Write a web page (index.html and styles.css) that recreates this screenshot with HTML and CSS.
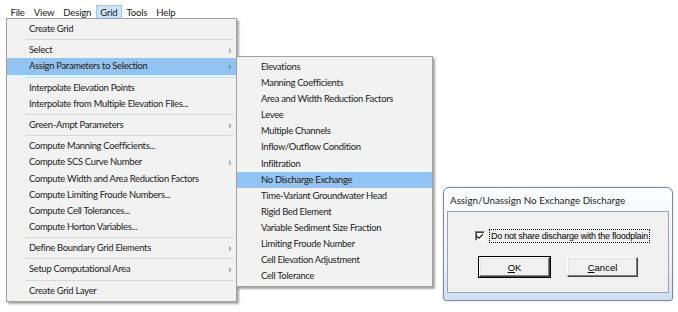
FILE: index.html
```html
<!DOCTYPE html>
<html lang="en">
<head>
    <meta charset="UTF-8">
    <meta name="viewport" content="width=device-width, initial-scale=1.0">
    <title>Grid Menu - No Discharge Exchange</title>
    <link rel="stylesheet" href="styles.css">
</head>
<body>
    <!-- Top menu bar -->
    <div class="menubar">
        <span class="menubar-item">File</span>
        <span class="menubar-item">View</span>
        <span class="menubar-item">Design</span>
        <span class="menubar-item open">Grid</span>
        <span class="menubar-item">Tools</span>
        <span class="menubar-item">Help</span>
    </div>

    <!-- Grid dropdown -->
    <div class="popup grid-menu">
        <div class="menu-item">Create Grid</div>
        <div class="menu-sep"></div>
        <div class="menu-item sub">Select</div>
        <div class="menu-item sub active">Assign Parameters to Selection</div>
        <div class="menu-sep"></div>
        <div class="menu-item">Interpolate Elevation Points</div>
        <div class="menu-item">Interpolate from Multiple Elevation Files...</div>
        <div class="menu-sep"></div>
        <div class="menu-item sub">Green-Ampt Parameters</div>
        <div class="menu-sep"></div>
        <div class="menu-item">Compute Manning Coefficients...</div>
        <div class="menu-item sub">Compute SCS Curve Number</div>
        <div class="menu-item">Compute Width and Area Reduction Factors</div>
        <div class="menu-item">Compute Limiting Froude Numbers...</div>
        <div class="menu-item">Compute Cell Tolerances...</div>
        <div class="menu-item">Compute Horton Variables...</div>
        <div class="menu-sep"></div>
        <div class="menu-item sub">Define Boundary Grid Elements</div>
        <div class="menu-sep"></div>
        <div class="menu-item sub">Setup Computational Area</div>
        <div class="menu-sep"></div>
        <div class="menu-item">Create Grid Layer</div>
    </div>

    <!-- Assign Parameters submenu -->
    <div class="popup assign-menu">
        <div class="menu-item">Elevations</div>
        <div class="menu-item">Manning Coefficients</div>
        <div class="menu-item">Area and Width Reduction Factors</div>
        <div class="menu-item">Levee</div>
        <div class="menu-item">Multiple Channels</div>
        <div class="menu-item">Inflow/Outflow Condition</div>
        <div class="menu-item">Infiltration</div>
        <div class="menu-item active">No Discharge Exchange</div>
        <div class="menu-item">Time-Variant Groundwater Head</div>
        <div class="menu-item">Rigid Bed Element</div>
        <div class="menu-item">Variable Sediment Size Fraction</div>
        <div class="menu-item">Limiting Froude Number</div>
        <div class="menu-item">Cell Elevation Adjustment</div>
        <div class="menu-item">Cell Tolerance</div>
    </div>

    <!-- Dialog window -->
    <div class="dialog">
        <div class="dialog-title">Assign/Unassign No Exchange Discharge</div>
        <div class="dialog-body">
            <div class="check-row">
                <span class="checkbox">
                    <svg width="8" height="8" viewBox="0 0 8 8"><path d="M1 3.5 L3 5.5 L7 1.5 L7 3 L3 7 L1 5 Z" fill="#000"/></svg>
                </span>
                <span class="check-label">Do not share discharge with the floodplain</span>
            </div>
            <div class="button-row">
                <button class="btn default"><u>O</u>K</button>
                <button class="btn"><u>C</u>ancel</button>
            </div>
        </div>
    </div>
</body>
</html>
```

FILE: styles.css
```css
body {
    margin: 0;
    width: 678px;
    height: 312px;
    background: #fff;
    font-family: Lato, "Noto Sans", sans-serif;
    color: #1a1a1a;
    overflow: hidden;
}

/* Menu bar */
.menubar {
    display: flex;
    height: 18px;
    padding: 5px 0 0 6px;
    font-size: 9.6px;
    letter-spacing: -0.2px;
}
.menubar-item {
    padding: 1px 3.5px 0;
    line-height: 12px;
    border: 1px solid transparent;
}
.menubar-item.open {
    background: #cce4f7;
    border-color: #99c9ef;
}

/* Popups (dropdown + submenu) */
.popup {
    position: absolute;
    background: #f2f2f2;
    border: 1px solid #a0a0a0;
    padding: 2px 0;
    box-shadow: 2px 2px 2px rgba(0, 0, 0, 0.35);
    font-size: 9.4px;
    letter-spacing: -0.28px;
}
.grid-menu {
    left: 6px;
    top: 18px;
    width: 229px;
}
.assign-menu {
    left: 236px;
    top: 56px;
    width: 195px;
}
.menu-item {
    position: relative;
    height: 16.2px;
    line-height: 16.2px;
    padding-left: 22px;
    white-space: nowrap;
}
.assign-menu .menu-item {
    height: 16.1px;
    line-height: 16.1px;
    padding-left: 24px;
}
.menu-item.active {
    background: #91c4f2;
}
.menu-item.sub:after {
    content: "\203A";
    position: absolute;
    right: 5px;
    top: 0;
    color: #666;
    font-size: 11px;
}
.menu-sep {
    height: 1px;
    background: #d7d7d7;
    margin: 2px 2px 2px 19px;
}

/* Dialog */
.dialog {
    position: absolute;
    left: 443px;
    top: 187px;
    width: 228px;
    height: 112px;
    border: 1px solid #7c8a9c;
    border-radius: 6px 6px 3px 3px;
    background: linear-gradient(#fdfeff, #eaf1f9 70%, #cfe0f2);
    box-shadow: 0 0 2px rgba(120, 150, 190, 0.5);
}
.dialog-title {
    height: 23px;
    line-height: 24px;
    padding-left: 6px;
    font-size: 9.8px;
    color: #1e1e1e;
}
.dialog-body {
    margin: 0 3px;
    height: 80px;
    background: #f0f0f0;
    border: 1px solid #9aa4b0;
    font-family: "Liberation Sans", Arial, sans-serif;
    font-size: 9px;
    color: #000;
}
.check-row {
    display: flex;
    align-items: center;
    margin: 17px 0 0 27px;
}
.checkbox {
    display: flex;
    align-items: center;
    justify-content: center;
    width: 8px;
    height: 8px;
    background: #fff;
    border: 1px solid;
    border-color: #808080 #fff #fff #808080;
    box-shadow: inset 1px 1px #404040;
}
.check-label {
    margin-left: 4px;
    padding: 1px 1px;
    border: 1px dotted #000;
    letter-spacing: -0.25px;
}
.button-row {
    display: flex;
    gap: 17px;
    margin: 14px 0 0 31px;
}
.btn {
    width: 71px;
    height: 20px;
    padding: 0;
    background: #f0f0f0;
    font: inherit;
    font-size: 9.5px;
    color: #000;
    border: 1px solid;
    border-color: #fff #404040 #404040 #fff;
    box-shadow: inset -1px -1px #808080, inset 1px 1px #e3e3e3;
}
.btn.default {
    outline: 1px solid #000;
}
```
